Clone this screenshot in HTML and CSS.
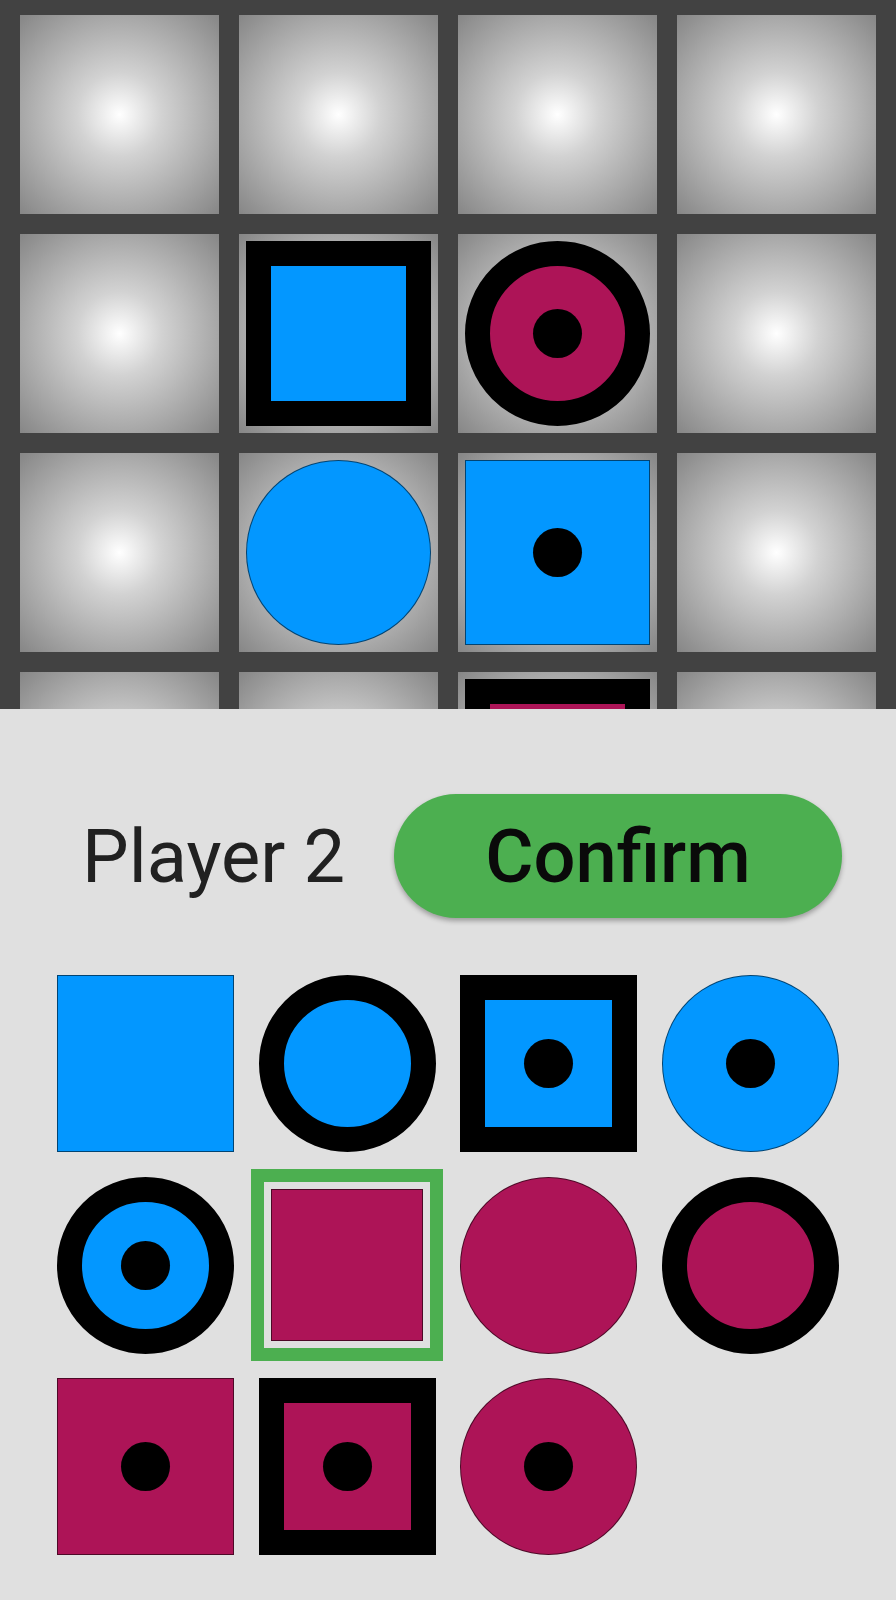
FILE: index.html
```html
<!DOCTYPE html>
<html lang="en">
<head>
<meta charset="utf-8">
<title>Quarto</title>
<link rel="stylesheet" href="styles.css">
</head>
<body>
<div class="app">
  <div class="board">
    <div class="board-grid">
      <div class="cell"></div>
      <div class="cell"></div>
      <div class="cell"></div>
      <div class="cell"></div>

      <div class="cell"></div>
      <div class="cell"><div class="piece blue sq ring"></div></div>
      <div class="cell"><div class="piece magenta ci ring dot"></div></div>
      <div class="cell"></div>

      <div class="cell"></div>
      <div class="cell"><div class="piece blue ci thin"></div></div>
      <div class="cell"><div class="piece blue sq thin dot"></div></div>
      <div class="cell"></div>

      <div class="cell"></div>
      <div class="cell"></div>
      <div class="cell"><div class="piece magenta sq ring"></div></div>
      <div class="cell"></div>
    </div>
  </div>

  <div class="panel">
    <div class="turn-row">
      <span class="player">Player 2</span>
      <button class="confirm" type="button">Confirm</button>
    </div>

    <div class="tray">
      <div class="slot"><div class="piece blue sq thin"></div></div>
      <div class="slot"><div class="piece blue ci ring"></div></div>
      <div class="slot"><div class="piece blue sq ring dot"></div></div>
      <div class="slot"><div class="piece blue ci thin dot"></div></div>

      <div class="slot"><div class="piece blue ci ring dot"></div></div>
      <div class="slot selected"><div class="frame"><div class="piece magenta sq thin"></div></div></div>
      <div class="slot"><div class="piece magenta ci thin"></div></div>
      <div class="slot"><div class="piece magenta ci ring"></div></div>

      <div class="slot"><div class="piece magenta sq thin dot"></div></div>
      <div class="slot"><div class="piece magenta sq ring dot"></div></div>
      <div class="slot"><div class="piece magenta ci thin dot"></div></div>
    </div>
  </div>
</div>
</body>
</html>
```

FILE: styles.css
```css
html, body {
  margin: 0;
  padding: 0;
}

body {
  background: #e0e0e0;
  font-family: Roboto, "Noto Sans", "Liberation Sans", sans-serif;
}

.app {
  width: 896px;
  height: 1600px;
  display: flex;
  flex-direction: column;
}

/* ---------- Board ---------- */
.board {
  height: 709px;
  flex: none;
  overflow: hidden;
  background: #424242;
}

.board-grid {
  display: grid;
  grid-template-columns: repeat(4, 199px);
  grid-auto-rows: 199px;
  gap: 20px;
  padding: 15px 20px 0;
}

.cell {
  background: radial-gradient(circle farthest-corner at 50% 50%, #ffffff 0%, #d2d2d2 30%, #a9a9a9 68%, #868686 100%);
  display: flex;
  align-items: center;
  justify-content: center;
}

.cell .piece {
  width: 185px;
  height: 185px;
}

/* ---------- Pieces ---------- */
.piece {
  box-sizing: border-box;
  display: flex;
  align-items: center;
  justify-content: center;
  flex: none;
}

.piece.blue {
  background: #0397ff;
}

.piece.magenta {
  background: #ad1457;
}

.piece.ci {
  border-radius: 50%;
}

.piece.sq {
  border-radius: 0;
}

.piece.thin {
  border: 1px solid rgba(0, 0, 0, 0.55);
}

.piece.ring {
  border: 25px solid #000;
}

.piece.dot::after {
  content: "";
  width: 49px;
  height: 49px;
  border-radius: 50%;
  background: #000;
  flex: none;
}

/* ---------- Panel ---------- */
.panel {
  flex: 1;
  background: #e0e0e0;
  padding-top: 85px;
}

.turn-row {
  display: flex;
  align-items: center;
  padding-left: 82px;
}

.player {
  width: 312px;
  flex: none;
  font-size: 74px;
  line-height: normal;
  color: #212121;
  font-weight: 400;
}

.confirm {
  width: 448px;
  height: 124px;
  border: none;
  border-radius: 62px;
  background: #4caf50;
  color: #0a0a0a;
  font-family: Roboto, "Noto Sans", "Liberation Sans", sans-serif;
  font-size: 74px;
  font-weight: 500;
  line-height: normal;
  padding: 0;
  display: flex;
  align-items: center;
  justify-content: center;
  box-shadow: 0 3px 5px rgba(0, 0, 0, 0.3);
}

/* ---------- Tray ---------- */
.tray {
  margin-top: 45px;
  display: grid;
  grid-template-columns: repeat(4, 201.5px);
  grid-auto-rows: 201.5px;
  justify-content: center;
}

.slot {
  display: flex;
  align-items: center;
  justify-content: center;
}

.slot > .piece {
  width: 177px;
  height: 177px;
}

.frame {
  box-sizing: border-box;
  width: 192px;
  height: 192px;
  border: 13px solid #4caf50;
  padding: 7px;
  display: flex;
  align-items: center;
  justify-content: center;
}

.frame .piece {
  width: 152px;
  height: 152px;
}
```
